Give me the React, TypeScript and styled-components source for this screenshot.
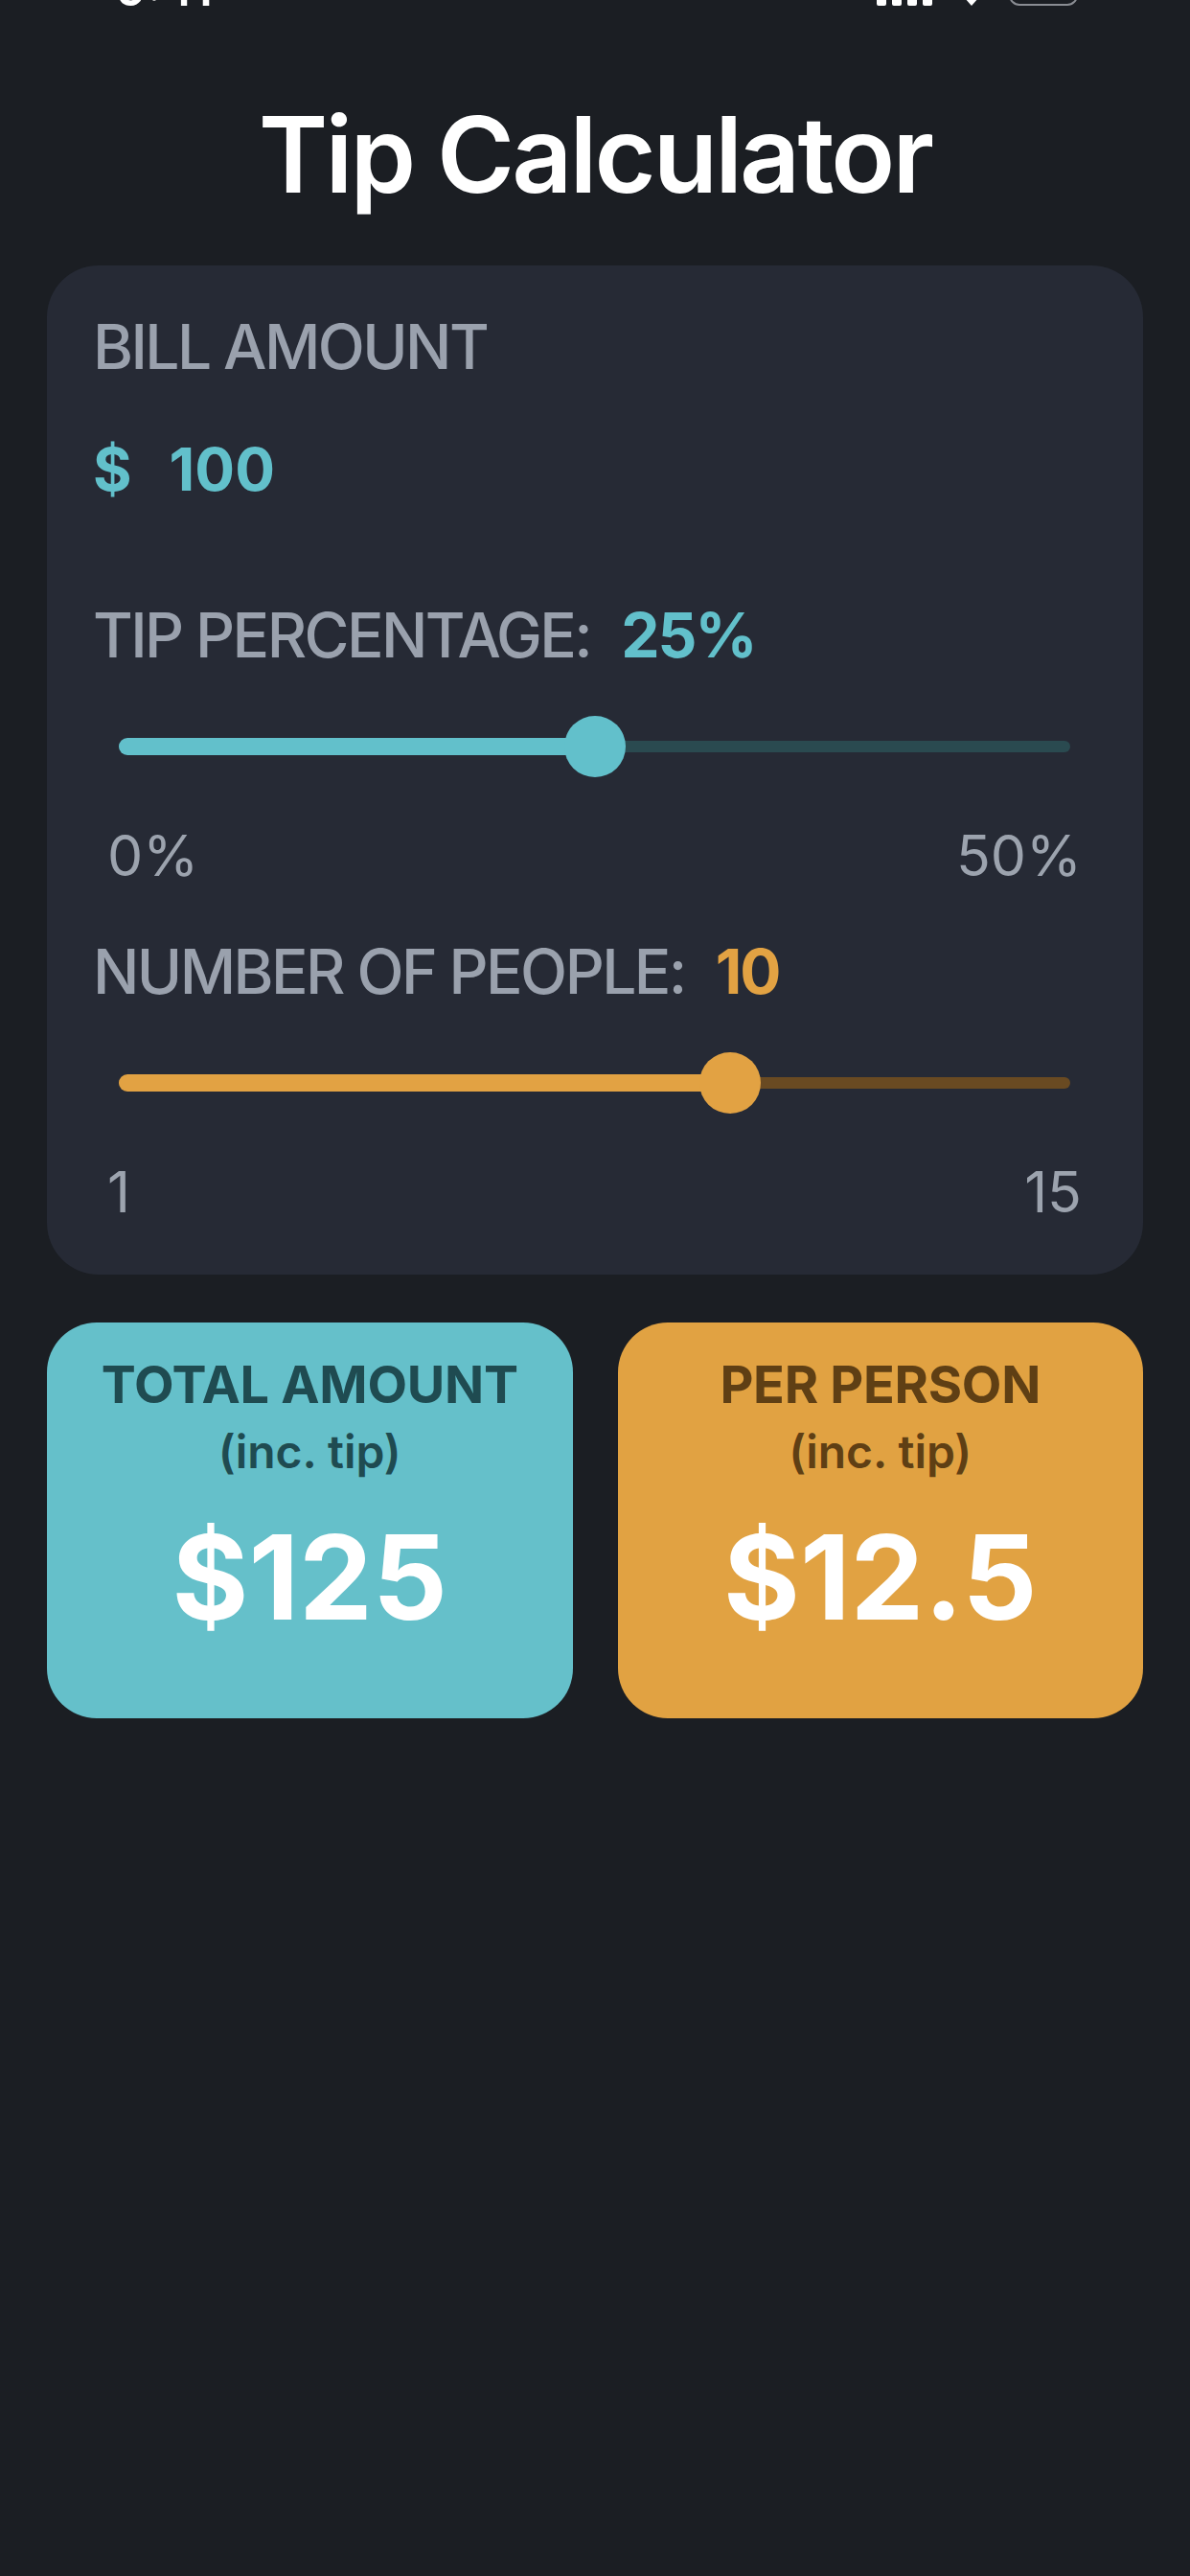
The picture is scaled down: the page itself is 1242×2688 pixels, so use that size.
import React from "react";
import styled, { createGlobalStyle } from "styled-components";

const GlobalStyle = createGlobalStyle`
  html, body {
    margin: 0;
    padding: 0;
    background: #1b1e23;
  }
  body {
    font-family: Inter, "Noto Sans", "Liberation Sans", sans-serif;
    -webkit-font-smoothing: antialiased;
  }
  * { box-sizing: border-box; }
`;

const Page = styled.div`
  width: 1242px;
  min-height: 2688px;
  background: #1b1e23;
  padding: 0 49px;
  display: flex;
  flex-direction: column;
`;

const StatusBar = styled.div`
  height: 6px;
  overflow: hidden;
  display: flex;
  align-items: flex-end;
  justify-content: space-between;
  padding: 0 60px 0 72px;
`;

const StatusTime = styled.span`
  font-size: 50px;
  line-height: 1;
  font-weight: 600;
  color: #ffffff;
  margin-bottom: -7px;
`;

const StatusIcons = styled.div`
  display: flex;
  align-items: flex-end;
  gap: 14px;
`;

const Title = styled.h1`
  margin: 100px 0 0;
  font-size: 110px;
  line-height: 1;
  font-weight: 600;
  letter-spacing: -0.026em;
  color: #ffffff;
  text-align: center;
`;

const Card = styled.section`
  margin-top: 61px;
  background: #262a35;
  border-radius: 54px;
  padding: 53px 48px 57px;
  display: flex;
  flex-direction: column;
`;

const FieldLabel = styled.div<{ $mt?: number }>`
  margin-top: ${(p) => p.$mt ?? 0}px;
  display: flex;
  align-items: baseline;
  font-size: 64px;
  line-height: 1;
  font-weight: 500;
  letter-spacing: -0.04em;
  color: #9aa1ad;
`;

const LabelValue = styled.span<{ $color: string }>`
  margin-left: 32px;
  font-weight: 700;
  letter-spacing: -0.03em;
  color: ${(p) => p.$color};
`;

const BillRow = styled.div`
  margin-top: 65px;
  display: flex;
  align-items: baseline;
  gap: 39px;
  font-size: 62px;
  line-height: 1;
  font-weight: 700;
  color: #62c0cb;
`;

const SliderBox = styled.div`
  margin: 52px 28px 0 27px;
  position: relative;
  height: 64px;
  display: flex;
  align-items: center;
`;

const Rail = styled.div<{ $color: string }>`
  width: 100%;
  height: 12px;
  border-radius: 6px;
  background: ${(p) => p.$color};
`;

const Fill = styled.div<{ $color: string }>`
  position: absolute;
  left: 0;
  top: 23px;
  height: 18px;
  border-radius: 9px;
  background: ${(p) => p.$color};
`;

const Thumb = styled.div<{ $color: string }>`
  position: absolute;
  top: 0;
  width: 64px;
  height: 64px;
  margin-left: -32px;
  border-radius: 50%;
  background: ${(p) => p.$color};
`;

const RangeRow = styled.div`
  margin-top: 52px;
  padding: 0 16px 0 15px;
  display: flex;
  justify-content: space-between;
  font-size: 59px;
  line-height: 1;
  font-weight: 400;
  color: #9ca3ae;
`;

const Results = styled.div`
  margin-top: 50px;
  display: grid;
  grid-template-columns: 1fr 1fr;
  gap: 47px;
`;

const ResultCard = styled.div<{ $bg: string; $fg: string }>`
  background: ${(p) => p.$bg};
  color: ${(p) => p.$fg};
  border-radius: 52px;
  height: 413px;
  padding-top: 38px;
  display: flex;
  flex-direction: column;
  align-items: center;
  text-align: center;
`;

const ResultTitle = styled.div`
  font-size: 54px;
  line-height: 1;
  font-weight: 700;
  letter-spacing: -0.005em;
`;

const ResultSub = styled.div`
  margin-top: 19px;
  font-size: 48px;
  line-height: 1;
  font-weight: 600;
`;

const ResultValue = styled.div`
  margin-top: 46px;
  font-size: 122px;
  line-height: 1;
  font-weight: 700;
  color: #ffffff;
  letter-spacing: 0;
`;

type SliderProps = {
  value: number;
  min: number;
  max: number;
  color: string;
  rail: string;
};

function Slider({ value, min, max, color, rail }: SliderProps) {
  const pct = ((value - min) / (max - min)) * 100;
  return (
    <SliderBox>
      <Rail $color={rail} />
      <Fill $color={color} style={{ width: `${pct}%` }} />
      <Thumb $color={color} style={{ left: `${pct}%` }} />
    </SliderBox>
  );
}

const TEAL = "#62c0cb";
const ORANGE = "#e2a243";

export default function App() {
  const bill = 100;
  const tip = 25;
  const people = 10;
  const total = bill + (bill * tip) / 100;
  const per = Math.round((total / people) * 100) / 100;

  return (
    <>
      <GlobalStyle />
      <Page>
        <StatusBar>
          <StatusTime>9:41</StatusTime>
          <StatusIcons>
            <svg width="60" height="36" viewBox="0 0 60 36">
              <rect x="0" y="24" width="10" height="12" rx="2" fill="#fff" />
              <rect x="16" y="16" width="10" height="20" rx="2" fill="#fff" />
              <rect x="32" y="8" width="10" height="28" rx="2" fill="#fff" />
              <rect x="48" y="0" width="10" height="36" rx="2" fill="#fff" />
            </svg>
            <svg width="50" height="36" viewBox="0 0 50 36">
              <path d="M25 36 L17 27 A12 12 0 0 1 33 27 Z" fill="#fff" />
              <path d="M9 19 A23 23 0 0 1 41 19" stroke="#fff" strokeWidth="6" fill="none" strokeLinecap="round" />
            </svg>
            <svg width="80" height="38" viewBox="0 0 80 38">
              <rect x="1" y="1" width="70" height="36" rx="10" fill="none" stroke="#8a8d93" strokeWidth="2" />
              <rect x="6" y="6" width="50" height="26" rx="6" fill="#fff" />
              <rect x="74" y="12" width="5" height="14" rx="2" fill="#8a8d93" />
            </svg>
          </StatusIcons>
        </StatusBar>

        <Title>Tip Calculator</Title>

        <Card>
          <FieldLabel>BILL AMOUNT</FieldLabel>
          <BillRow>
            <span>$</span>
            <span>{bill}</span>
          </BillRow>

          <FieldLabel $mt={110}>
            TIP PERCENTAGE:
            <LabelValue $color={TEAL}>{tip}%</LabelValue>
          </FieldLabel>
          <Slider value={tip} min={0} max={50} color={TEAL} rail="#2a4a50" />
          <RangeRow>
            <span>0%</span>
            <span>50%</span>
          </RangeRow>

          <FieldLabel $mt={60}>
            NUMBER OF PEOPLE:
            <LabelValue $color={ORANGE}>{people}</LabelValue>
          </FieldLabel>
          <Slider value={people} min={1} max={15} color={ORANGE} rail="#694a22" />
          <RangeRow>
            <span>1</span>
            <span>15</span>
          </RangeRow>
        </Card>

        <Results>
          <ResultCard $bg="#65c0ca" $fg="#1f4b51">
            <ResultTitle>TOTAL AMOUNT</ResultTitle>
            <ResultSub>(inc. tip)</ResultSub>
            <ResultValue>${total}</ResultValue>
          </ResultCard>
          <ResultCard $bg="#e1a242" $fg="#5f3f14">
            <ResultTitle>PER PERSON</ResultTitle>
            <ResultSub>(inc. tip)</ResultSub>
            <ResultValue>${per}</ResultValue>
          </ResultCard>
        </Results>
      </Page>
    </>
  );
}
